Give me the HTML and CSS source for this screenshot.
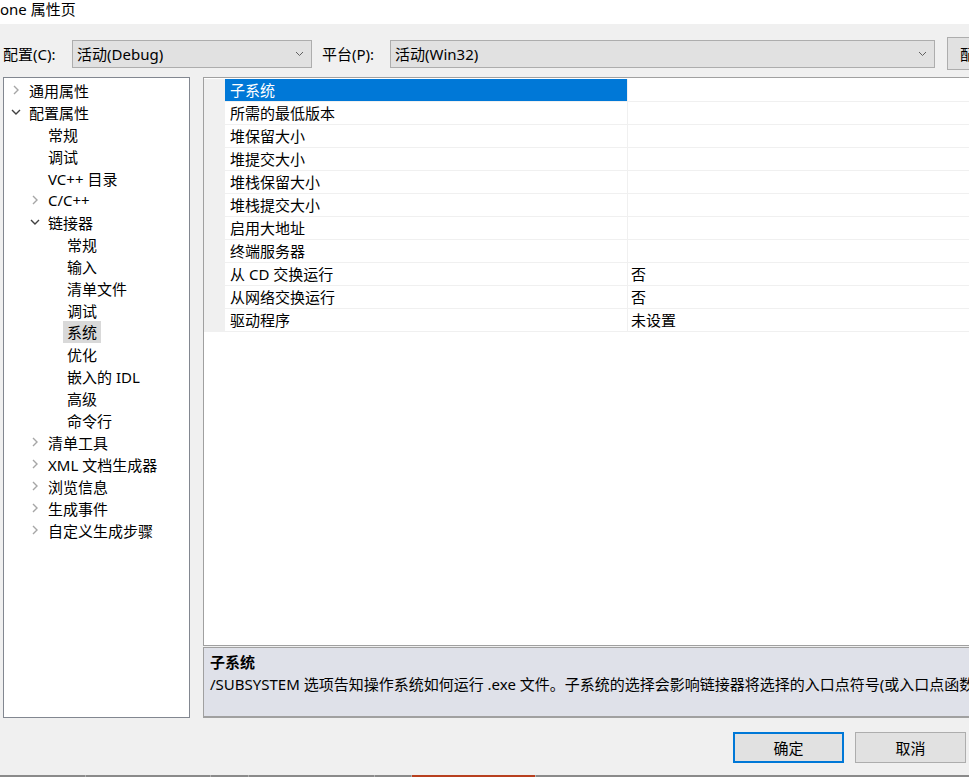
FILE: index.html
```html
<!DOCTYPE html>
<html lang="zh-CN">
<head>
  <meta charset="UTF-8">
  <meta name="viewport" content="width=device-width, initial-scale=1.0">
  <title>one 属性页</title>
  <link rel="stylesheet" href="styles.css">
</head>
<body>
  <div class="titlebar">one 属性页</div>

  <!-- configuration / platform selectors -->
  <div class="config-row">
    <span class="config-label">配置(C):</span>
    <div class="combo combo-config">
      <span>活动(Debug)</span>
      <svg class="combo-arrow" width="9" height="6" viewBox="0 0 9 6"><polyline points="1,1 4.5,4.5 8,1" fill="none" stroke="#606060" stroke-width="1"/></svg>
    </div>
    <span class="config-label platform-label">平台(P):</span>
    <div class="combo combo-platform">
      <span>活动(Win32)</span>
      <svg class="combo-arrow" width="9" height="6" viewBox="0 0 9 6"><polyline points="1,1 4.5,4.5 8,1" fill="none" stroke="#606060" stroke-width="1"/></svg>
    </div>
    <button class="btn btn-manager">配置管理器(O)...</button>
  </div>

  <div class="main">
    <ul class="tree">
      <li class="lv0"><span class="chev closed"></span>通用属性</li>
      <li class="lv0"><span class="chev open"></span>配置属性</li>
      <li class="lv1"><span class="chev"></span>常规</li>
      <li class="lv1"><span class="chev"></span>调试</li>
      <li class="lv1"><span class="chev"></span>VC++ 目录</li>
      <li class="lv1"><span class="chev closed"></span>C/C++</li>
      <li class="lv1"><span class="chev open"></span>链接器</li>
      <li class="lv2"><span class="chev"></span>常规</li>
      <li class="lv2"><span class="chev"></span>输入</li>
      <li class="lv2"><span class="chev"></span>清单文件</li>
      <li class="lv2"><span class="chev"></span>调试</li>
      <li class="lv2"><span class="chev"></span><span class="selected">系统</span></li>
      <li class="lv2"><span class="chev"></span>优化</li>
      <li class="lv2"><span class="chev"></span>嵌入的 IDL</li>
      <li class="lv2"><span class="chev"></span>高级</li>
      <li class="lv2"><span class="chev"></span>命令行</li>
      <li class="lv1"><span class="chev closed"></span>清单工具</li>
      <li class="lv1"><span class="chev closed"></span>XML 文档生成器</li>
      <li class="lv1"><span class="chev closed"></span>浏览信息</li>
      <li class="lv1"><span class="chev closed"></span>生成事件</li>
      <li class="lv1"><span class="chev closed"></span>自定义生成步骤</li>
    </ul>

    <div class="right">
      <div class="grid">
        <div class="row active"><div class="gutter"></div><div class="name">子系统</div><div class="value"></div></div>
        <div class="row"><div class="gutter"></div><div class="name">所需的最低版本</div><div class="value"></div></div>
        <div class="row"><div class="gutter"></div><div class="name">堆保留大小</div><div class="value"></div></div>
        <div class="row"><div class="gutter"></div><div class="name">堆提交大小</div><div class="value"></div></div>
        <div class="row"><div class="gutter"></div><div class="name">堆栈保留大小</div><div class="value"></div></div>
        <div class="row"><div class="gutter"></div><div class="name">堆栈提交大小</div><div class="value"></div></div>
        <div class="row"><div class="gutter"></div><div class="name">启用大地址</div><div class="value"></div></div>
        <div class="row"><div class="gutter"></div><div class="name">终端服务器</div><div class="value"></div></div>
        <div class="row"><div class="gutter"></div><div class="name">从 CD 交换运行</div><div class="value">否</div></div>
        <div class="row"><div class="gutter"></div><div class="name">从网络交换运行</div><div class="value">否</div></div>
        <div class="row"><div class="gutter"></div><div class="name">驱动程序</div><div class="value">未设置</div></div>
      </div>
      <div class="desc">
        <div class="desc-title">子系统</div>
        <div class="desc-text">/SUBSYSTEM 选项告知操作系统如何运行 .exe 文件。子系统的选择会影响链接器将选择的入口点符号(或入口点函数)。</div>
      </div>
    </div>
  </div>

  <div class="buttons">
    <button class="btn btn-ok">确定</button>
    <button class="btn btn-cancel">取消</button>
  </div>

  <div class="taskbar">
    <span class="seg" style="width: 85px"></span>
    <span class="seg" style="width: 124px"></span>
    <span class="seg" style="width: 37px"></span>
    <span class="seg" style="width: 125px"></span>
    <span class="seg" style="width: 36px"></span>
    <span class="seg seg-active" style="width: 123px"></span>
    <span class="seg seg-rest"></span>
  </div>
</body>
</html>
```

FILE: styles.css
```css
body {
  margin: 0;
  padding: 0;
  width: 969px;
  height: 777px;
  overflow: hidden;
  background-color: #f0f0f0;
  font-family: "Noto Sans", "Noto Sans CJK SC", sans-serif;
  font-size: 15px;
  color: #000;
}

.titlebar {
  height: 24px;
  line-height: 18px;
  background: #fff;
  white-space: nowrap;
}

.config-row {
  display: flex;
  align-items: center;
  height: 33px;
  margin-top: 13px;
  white-space: nowrap;
}

.config-row > * {
  flex-shrink: 0;
}

.config-label {
  margin-left: 3px;
  width: 69px;
}

.platform-label {
  margin-left: 10px;
  width: 68px;
}

.combo {
  box-sizing: border-box;
  height: 28px;
  display: flex;
  align-items: center;
  justify-content: space-between;
  padding: 0 7px 0 4px;
  background: #e1e1e1;
  border: 1px solid #adadad;
}

.combo-config {
  width: 240px;
}

.combo-platform {
  width: 545px;
}

.combo-arrow {
  display: block;
}

.btn {
  box-sizing: border-box;
  font-family: inherit;
  font-size: 15px;
  color: #000;
  background: #e1e1e1;
  border: 1px solid #adadad;
  padding: 0;
  cursor: pointer;
}

.btn-manager {
  height: 33px;
  margin-left: 12px;
  padding: 0 12px;
  text-align: left;
}

.main {
  display: flex;
  margin-top: 7px;
  height: 641px;
}

.tree {
  box-sizing: border-box;
  flex-shrink: 0;
  list-style: none;
  margin: 0 0 0 3px;
  padding: 1px 0 0 0;
  width: 187px;
  background: #fff;
  border: 1px solid #828790;
}

.tree li {
  display: flex;
  align-items: center;
  height: 22px;
  white-space: nowrap;
}

.tree .lv0 { padding-left: 4px; }
.tree .lv1 { padding-left: 23px; }
.tree .lv2 { padding-left: 42px; }

.chev {
  flex-shrink: 0;
  width: 16px;
  height: 22px;
  margin-right: 5px;
  background-repeat: no-repeat;
}

.chev.closed {
  background-image: url("data:image/svg+xml;utf8,<svg xmlns='http://www.w3.org/2000/svg' width='16' height='22'><polyline points='6,7 10,11 6,15' fill='none' stroke='%23a6a6a6' stroke-width='1.4'/></svg>");
}

.chev.open {
  background-image: url("data:image/svg+xml;utf8,<svg xmlns='http://www.w3.org/2000/svg' width='16' height='22'><polyline points='4,9 8,13 12,9' fill='none' stroke='%23404040' stroke-width='1.4'/></svg>");
}

.tree .selected {
  background: #d9d9d9;
  margin-left: -4px;
  padding: 0 4px;
  line-height: 22px;
}

.right {
  display: flex;
  flex-direction: column;
  flex-shrink: 0;
  margin-left: 13px;
  width: 790px;
}

.grid {
  box-sizing: border-box;
  flex: 1;
  background: #fff;
  border: 1px solid #a0a0a0;
  padding-top: 1px;
}

.row {
  display: flex;
  height: 23px;
  box-sizing: border-box;
  border-bottom: 1px solid #f0f0f0;
  white-space: nowrap;
}

.gutter {
  width: 21px;
  background: #f0f0f0;
}

.row .name {
  box-sizing: border-box;
  width: 403px;
  padding-left: 5px;
  line-height: 22px;
  border-right: 1px solid #f0f0f0;
}

.row .value {
  flex: 1;
  padding-left: 3px;
  line-height: 22px;
}

.row.active .name {
  background: #0078d7;
  color: #fff;
}

.desc {
  box-sizing: border-box;
  height: 71px;
  margin-top: 1px;
  padding: 3px 6px 0 6px;
  background: #dfe1e9;
  border: 1px solid #a0a0a0;
  border-bottom: 2px solid #a0a0a0;
  white-space: nowrap;
  overflow: hidden;
}

.desc-title {
  font-weight: bold;
  line-height: 22px;
}

.desc-text {
  line-height: 22px;
}

.buttons {
  display: flex;
  justify-content: flex-end;
  gap: 11px;
  margin-top: 14px;
  padding-right: 3px;
}

.buttons .btn {
  width: 111px;
  height: 31px;
}

.btn-ok {
  border: 2px solid #0078d7;
}

.taskbar {
  display: flex;
  margin-top: 12px;
  height: 2px;
}

.seg {
  height: 2px;
  background: #8a8a8a;
  border-right: 1px solid #b0b0b0;
}

.seg-active {
  background: #b8401f;
}

.seg-rest {
  flex: 1;
  border-right: none;
}
```
